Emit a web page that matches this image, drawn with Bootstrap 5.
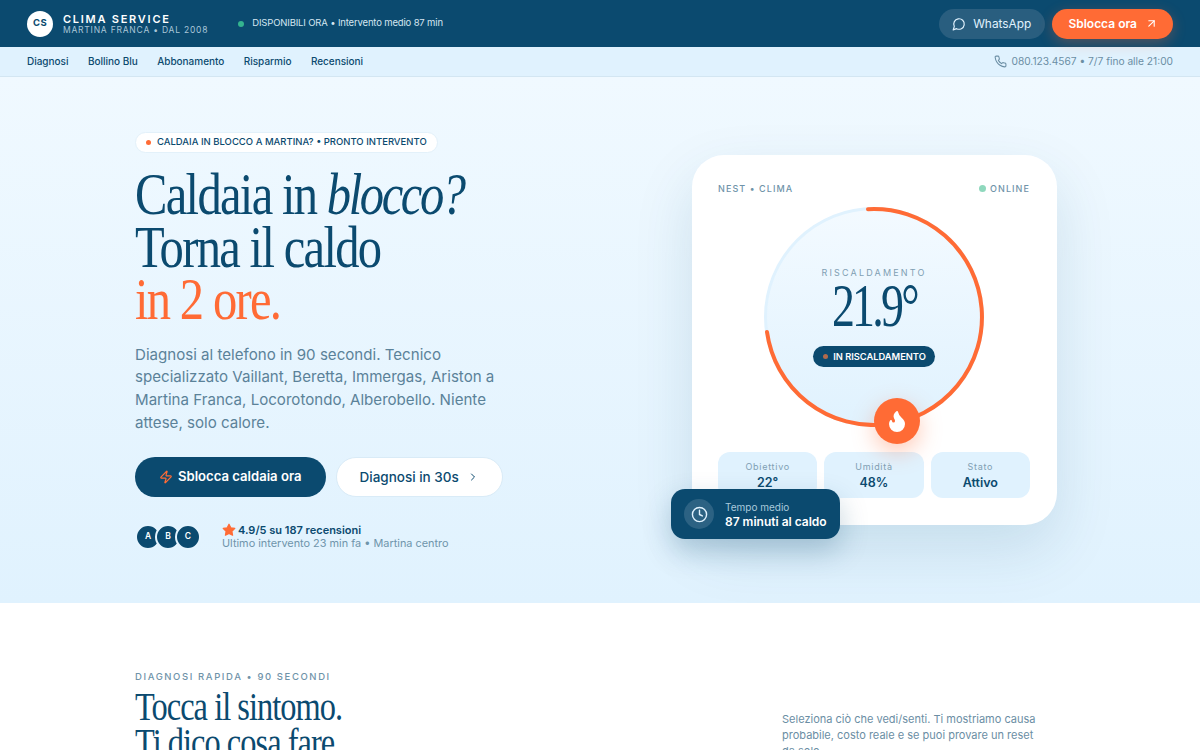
<!DOCTYPE html>
<html lang="it">
<head>
<meta charset="UTF-8">
<meta name="viewport" content="width=device-width, initial-scale=1.0">
<title>Clima Service</title>
<link href="https://cdn.jsdelivr.net/npm/bootstrap@5.3.0/dist/css/bootstrap.min.css" rel="stylesheet">
<script src="https://cdn.jsdelivr.net/npm/bootstrap@5.3.0/dist/js/bootstrap.bundle.min.js"></script>
<style>
    html, body { height: 750px; overflow: hidden; }
    body { font-family: Inter, "Liberation Sans", sans-serif; color: #0b4a6f; background: #fff; }
    svg.ico { fill: none; stroke: currentColor; stroke-width: 2; stroke-linecap: round; stroke-linejoin: round; flex: none; }

    .topbar { height: 47px; background: #0b4a6f; padding: 0 27px; }
    .logo-disc { width: 26px; height: 26px; background: #fff; color: #0b4a6f; font-size: 9.5px; font-weight: 700; letter-spacing: .04em; }
    .brand-box { margin-left: 10px; padding-top: 1px; }
    .brand-name { font-size: 11px; font-weight: 600; letter-spacing: 1.75px; color: #fff; line-height: 11px; }
    .brand-sub { font-size: 8.5px; letter-spacing: .78px; color: #a9c6d8; line-height: 10px; }
    .avail { font-size: 9.5px; letter-spacing: -.16px; color: #d5e6f1; margin-left: 30px; }
    .dot-green { width: 6px; height: 6px; background: #34b48f; }
    .top-actions { gap: 7px; }
    .btn-wa { height: 30px; padding: 0 14px 0 13px; background: #295e7f; color: #e0f2fe; font-size: 11.9px; border: 0; border-radius: 15px; gap: 7px; }
    .btn-wa:hover { background: #295e7f; color: #e0f2fe; }
    .btn-go { height: 30px; padding: 0 15px 0 16px; background: #ff6b35; color: #fff; font-size: 12px; font-weight: 600; border: 0; border-radius: 15px; box-shadow: 0 4px 14px rgba(255,107,53,.3); }
    .btn-go:hover { background: #ff6b35; color: #fff; }

    .subnav { height: 30px; background: #e0f2fe; border-bottom: 1px solid #d3e6f2; padding: 0 27px; }
    .subnav-links { gap: 19.5px; }
    .subnav a { font-size: 10px; font-weight: 500; letter-spacing: -.02px; color: #0b4a6f; text-decoration: none; }
    .subnav-info { font-size: 10.2px; color: #6b8ea4; }

    .hero { height: 526px; background: linear-gradient(180deg, #f0f9ff 0%, #e0f2fe 100%); padding: 50px 143px 0 135px; }
    .hero-left { width: 372px; }
    .pill-tag { height: 21px; padding: 0 10px; background: #fff; border-radius: 11px; border: 1px solid #e3f1fa; font-size: 9.5px; font-weight: 500; color: #0b4a6f; gap: 6px; }
    .dot-orange { width: 5px; height: 5px; background: #ff6b35; }
    .hero-title { font-family: "Liberation Serif", serif; font-weight: 400; font-size: 60px; line-height: 52.5px; letter-spacing: -.035em; margin: 15px 0 0; white-space: nowrap; transform: scaleX(.81); transform-origin: left top; color: #0b4a6f; }
    .hero-title em { font-style: italic; letter-spacing: -.05em; }
    .hero-title .warm { color: #ff6b35; }
    .hero-copy { font-size: 15.1px; line-height: 22.7px; color: #5b8299; margin: 18px 0 0; }
    .btn-main { height: 40px; padding: 0 24px; background: #0b4a6f; color: #fff; font-size: 13.1px; font-weight: 600; border: 0; border-radius: 20px; white-space: nowrap; gap: 5px; }
    .btn-main:hover { background: #0b4a6f; color: #fff; }
    .btn-soft { height: 40px; padding: 0 23px; background: #fff; color: #0b4a6f; font-size: 13.5px; font-weight: 500; border: 1px solid #d9ebf7; border-radius: 20px; white-space: nowrap; gap: 8px; }
    .btn-soft:hover { background: #fff; color: #0b4a6f; }
    .cta-row { gap: 10px; margin-top: 23px; }
    .proof-row { margin-top: 26px; }
    .avatar-disc { width: 26px; height: 26px; background: #0b4a6f; color: #fff; font-size: 8.5px; font-weight: 600; border: 2px solid #e5f4fe; margin-left: -6px; }
    .avatar-disc:first-child { margin-left: 0; }
    .proof-text { margin-left: 21px; }
    .rating { font-size: 11px; font-weight: 600; line-height: 13px; color: #0b4a6f; gap: 2px; }
    .rating-sub { font-size: 10.9px; line-height: 13px; color: #6f95ab; }

    .device { width: 365px; height: 370px; background: #fff; border-radius: 32px; padding: 28px 27px 0 26px; margin-top: 28px; position: relative; box-shadow: 0 24px 60px rgba(11,74,111,.13); }
    .device-top { font-size: 9px; font-weight: 500; letter-spacing: .12em; color: #6f93a9; line-height: 11px; }
    .dot-mint { width: 7px; height: 7px; background: #8fd8bd; }
    .dial { width: 220px; height: 220px; margin: 13px auto 0; position: relative; background: linear-gradient(180deg, #f3faff, #e0f2fe); border-radius: 50%; border: 3px solid #e0f2fe; }
    .dial-arc { position: absolute; left: -3px; top: -3px; }
    .dial-label { font-size: 9px; letter-spacing: .24em; color: #7f9fb3; line-height: 11px; }
    .dial-temp { font-family: "Liberation Serif", serif; font-size: 62px; line-height: 52px; letter-spacing: -.06em; color: #0b4a6f; margin-top: 1px; transform: scaleX(.74); }
    .dial-state { height: 21px; padding: 0 9px 0 10px; background: #0b4a6f; color: #fff; font-size: 9.3px; font-weight: 600; border-radius: 11px; margin-top: 15.5px; gap: 5px; }
    .dot-dim { width: 5px; height: 5px; background: #b26a4c; }
    .flame-btn { width: 46px; height: 46px; background: #ff6b35; color: #fff; position: absolute; left: 182px; top: 243px; box-shadow: 0 8px 22px rgba(255,107,53,.35); }
    .stat-row { margin-top: 25px; gap: 7px; }
    .stat-tile { flex: 1; height: 46px; background: #e0f2fe; border-radius: 12px; }
    .stat-key { font-size: 9px; letter-spacing: .08em; color: #7f9fb3; line-height: 11px; }
    .stat-val { font-size: 12.5px; font-weight: 600; color: #0b4a6f; line-height: 15px; margin-top: 3px; }
    .float-time { width: 169px; height: 50px; background: #0b4a6f; border-radius: 14px; position: absolute; left: -21px; top: 334px; padding: 0 13px; gap: 11px; box-shadow: 0 12px 28px rgba(11,74,111,.25); }
    .clock-disc { width: 30px; height: 30px; background: #2c6283; color: #e0f2fe; }
    .float-text { padding-top: 2px; }
    .float-key { font-size: 10px; color: #a9c9dc; line-height: 13px; }
    .float-val { font-size: 12px; font-weight: 600; color: #fff; line-height: 15px; }

    .symptoms { padding: 68px 135px 0; background: #fff; }
    .eyebrow { font-size: 9.5px; letter-spacing: 1.6px; color: #6f93a9; font-weight: 500; line-height: 12px; }
    .sym-title { font-family: "Liberation Serif", serif; font-weight: 400; font-size: 40px; line-height: 35.5px; letter-spacing: -.03em; margin: 6px 0 0; transform: scaleX(.81); transform-origin: left top; white-space: nowrap; color: #0b4a6f; }
    .sym-copy { width: 262px; font-size: 11px; line-height: 16px; color: #6b8ea4; margin: 40px 21px 0 0; }
</style>
</head>
<body>
    <header class="topbar d-flex align-items-center justify-content-between">
        <div class="d-flex align-items-center">
            <div class="logo-disc rounded-circle d-flex align-items-center justify-content-center">CS</div>
            <div class="brand-box">
                <div class="brand-name">CLIMA SERVICE</div>
                <div class="brand-sub">MARTINA FRANCA • DAL 2008</div>
            </div>
            <div class="avail d-flex align-items-center gap-2">
                <span class="dot-green rounded-circle"></span>
                <span>DISPONIBILI ORA • Intervento medio 87 min</span>
            </div>
        </div>
        <div class="top-actions d-flex align-items-center">
            <a class="btn btn-wa d-flex align-items-center" href="#">
                <svg class="ico" width="14" height="14" viewBox="0 0 24 24"><path d="M7.9 20A9 9 0 1 0 4 16.1L2 22Z"/></svg>
                WhatsApp
            </a>
            <a class="btn btn-go d-flex align-items-center gap-2" href="#">
                Sblocca ora
                <svg class="ico" width="13" height="13" viewBox="0 0 24 24"><path d="M7 7h10v10"/><path d="M7 17 17 7"/></svg>
            </a>
        </div>
    </header>

    <nav class="subnav d-flex align-items-center justify-content-between">
        <div class="subnav-links d-flex">
            <a href="#">Diagnosi</a>
            <a href="#">Bollino Blu</a>
            <a href="#">Abbonamento</a>
            <a href="#">Risparmio</a>
            <a href="#">Recensioni</a>
        </div>
        <div class="subnav-info d-flex align-items-center gap-1">
            <svg class="ico" width="13" height="13" viewBox="0 0 24 24" stroke-width="1.6"><path d="M22 16.92v3a2 2 0 0 1-2.18 2 19.79 19.79 0 0 1-8.63-3.07 19.5 19.5 0 0 1-6-6 19.79 19.79 0 0 1-3.07-8.67A2 2 0 0 1 4.11 2h3a2 2 0 0 1 2 1.72 12.84 12.84 0 0 0 .7 2.81 2 2 0 0 1-.45 2.11L8.09 9.91a16 16 0 0 0 6 6l1.27-1.27a2 2 0 0 1 2.11-.45 12.84 12.84 0 0 0 2.81.7A2 2 0 0 1 22 16.92z"/></svg>
            <span>080.123.4567 • 7/7 fino alle 21:00</span>
        </div>
    </nav>

    <section class="hero d-flex justify-content-between">
        <div class="hero-left">
            <div class="pill-tag d-inline-flex align-items-center">
                <span class="dot-orange rounded-circle"></span>
                <span>CALDAIA IN BLOCCO A MARTINA? • PRONTO INTERVENTO</span>
            </div>
            <h1 class="hero-title">Caldaia in <em>blocco?</em><br>Torna il caldo<br><span class="warm">in 2 ore.</span></h1>
            <p class="hero-copy">Diagnosi al telefono in 90 secondi. Tecnico specializzato Vaillant, Beretta, Immergas, Ariston a Martina Franca, Locorotondo, Alberobello. Niente attese, solo calore.</p>
            <div class="cta-row d-flex">
                <a class="btn btn-main d-flex align-items-center" href="#">
                    <svg class="ico" width="14" height="14" viewBox="0 0 24 24" style="color:#ff6b35"><path d="M4 14a1 1 0 0 1-.78-1.63l9.9-10.2a.5.5 0 0 1 .86.46l-1.92 6.02A1 1 0 0 0 13 10h7a1 1 0 0 1 .78 1.63l-9.9 10.2a.5.5 0 0 1-.86-.46l1.92-6.02A1 1 0 0 0 11 14z"/></svg>
                    Sblocca caldaia ora
                </a>
                <a class="btn btn-soft d-flex align-items-center" href="#">
                    Diagnosi in 30s
                    <svg class="ico" width="12" height="12" viewBox="0 0 24 24"><path d="m9 18 6-6-6-6"/></svg>
                </a>
            </div>
            <div class="proof-row d-flex align-items-center">
                <div class="d-flex">
                    <span class="avatar-disc rounded-circle d-flex align-items-center justify-content-center">A</span>
                    <span class="avatar-disc rounded-circle d-flex align-items-center justify-content-center">B</span>
                    <span class="avatar-disc rounded-circle d-flex align-items-center justify-content-center">C</span>
                </div>
                <div class="proof-text">
                    <div class="rating d-flex align-items-center">
                        <svg width="14" height="14" viewBox="0 0 24 24" fill="#ff6b35" stroke="#ff6b35" stroke-width="2" stroke-linejoin="round"><polygon points="12 2 15.09 8.26 22 9.27 17 14.14 18.18 21.02 12 17.77 5.82 21.02 7 14.14 2 9.27 8.91 8.26 12 2"/></svg>
                        4.9/5 su 187 recensioni
                    </div>
                    <div class="rating-sub">Ultimo intervento 23 min fa • Martina centro</div>
                </div>
            </div>
        </div>

        <div class="device">
            <div class="device-top d-flex justify-content-between align-items-center">
                <span>NEST • CLIMA</span>
                <span class="d-flex align-items-center gap-1"><span class="dot-mint rounded-circle"></span>ONLINE</span>
            </div>
            <div class="dial d-flex flex-column align-items-center justify-content-center">
                <svg class="dial-arc" width="220" height="220" viewBox="0 0 220 220" fill="none"><path d="M 104 2.2 A 108 108 0 1 1 3 125" stroke="#ff6b35" stroke-width="4" stroke-linecap="round"/></svg>
                <div class="dial-label">RISCALDAMENTO</div>
                <div class="dial-temp">21.9°</div>
                <div class="dial-state d-flex align-items-center"><span class="dot-dim rounded-circle"></span>IN RISCALDAMENTO</div>
            </div>
            <div class="flame-btn rounded-circle d-flex align-items-center justify-content-center">
                <svg width="24" height="24" viewBox="0 0 24 24" fill="#fff" stroke="#fff" stroke-width="2" stroke-linecap="round" stroke-linejoin="round"><path d="M8.5 14.5A2.5 2.5 0 0 0 11 12c0-1.38-.5-2-1-3-1.072-2.143-.224-4.054 2-6 .5 2.5 2 4.9 4 6.5 2 1.6 3 3.5 3 5.5a7 7 0 1 1-14 0c0-1.153.433-2.294 1-3a2.5 2.5 0 0 0 2.5 2.5z"/></svg>
            </div>
            <div class="stat-row d-flex">
                <div class="stat-tile d-flex flex-column align-items-center justify-content-center"><div class="stat-key">Obiettivo</div><div class="stat-val">22°</div></div>
                <div class="stat-tile d-flex flex-column align-items-center justify-content-center"><div class="stat-key">Umidità</div><div class="stat-val">48%</div></div>
                <div class="stat-tile d-flex flex-column align-items-center justify-content-center"><div class="stat-key">Stato</div><div class="stat-val">Attivo</div></div>
            </div>
            <div class="float-time d-flex align-items-center">
                <div class="clock-disc rounded-circle d-flex align-items-center justify-content-center">
                    <svg class="ico" width="17" height="17" viewBox="0 0 24 24"><circle cx="12" cy="12" r="10"/><polyline points="12 6 12 12 16 14"/></svg>
                </div>
                <div class="float-text">
                    <div class="float-key">Tempo medio</div>
                    <div class="float-val">87 minuti al caldo</div>
                </div>
            </div>
        </div>
    </section>

    <section class="symptoms d-flex justify-content-between align-items-start">
        <div>
            <div class="eyebrow">DIAGNOSI RAPIDA • 90 SECONDI</div>
            <h2 class="sym-title">Tocca il sintomo.<br>Ti dico cosa fare.</h2>
        </div>
        <p class="sym-copy">Seleziona ciò che vedi/senti. Ti mostriamo causa probabile, costo reale e se puoi provare un reset da solo.</p>
    </section>
</body>
</html>
